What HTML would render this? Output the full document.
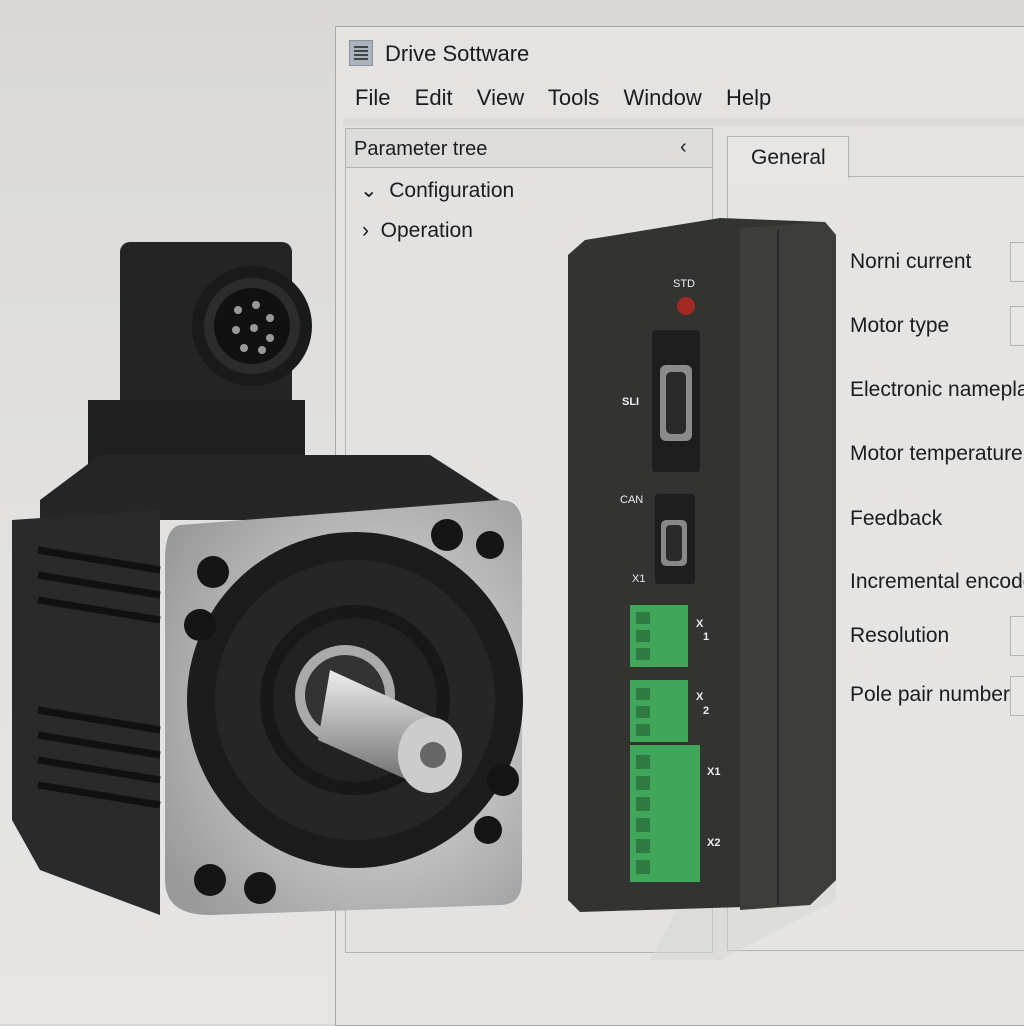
<!DOCTYPE html>
<html><head><meta charset="utf-8"><style>
*{margin:0;padding:0;box-sizing:border-box}
body{width:1024px;height:1024px;overflow:hidden;background:linear-gradient(180deg,#d9d8d6 0%,#e2e1df 50%,#e6e5e3 100%);font-family:"Liberation Sans","DejaVu Sans",sans-serif;position:relative}
.win{position:absolute;left:335px;top:26px;width:700px;height:1000px;background:#e4e3e1;border:1px solid #a8a8a6;border-right:none}
.t{position:absolute;color:#1c1c1c;white-space:nowrap}
.box{position:absolute;border:1px solid #b4b4b2}
</style></head><body>
<div class="win"></div>
<div style="position:absolute;left:349px;top:40px;width:24px;height:26px;background:#a9b3be;border:1px solid #8a949e"></div>
<div style="position:absolute;left:354px;top:46px;width:14px;height:14px;background:repeating-linear-gradient(180deg,#444 0 2px,transparent 2px 4px)"></div>
<div class="t" style="left:385px;top:41px;font-size:22px">Drive Sottware</div>
<div class="t" style="left:355px;top:85px;font-size:22px;word-spacing:6px">File&nbsp; Edit&nbsp; View&nbsp; Tools&nbsp; Window&nbsp; Help</div>
<div style="position:absolute;left:343px;top:118px;width:681px;height:8px;background:#dcdbd9"></div>
<div class="box" style="left:345px;top:128px;width:368px;height:825px;background:#e3e2e0"></div>
<div class="box" style="left:345px;top:128px;width:368px;height:40px;background:#dddcda"></div>
<div class="t" style="left:354px;top:138px;font-size:20px">Parameter tree</div>
<div class="t" style="left:680px;top:136px;font-size:20px">&lsaquo;</div>
<div class="t" style="left:360px;top:178px;font-size:21px">&#8964;&nbsp; Configuration</div>
<div class="t" style="left:362px;top:219px;font-size:21px">›&nbsp; Operation</div>
<div class="box" style="left:727px;top:176px;width:310px;height:775px;background:#e5e4e2"></div>
<div class="box" style="left:727px;top:136px;width:122px;height:42px;background:#e7e6e4;border-bottom:none"></div>
<div class="t" style="left:751px;top:146px;font-size:21px">General</div>
<div class="t" style="left:850px;top:250px;font-size:21px">Norni current</div>
<div class="t" style="left:850px;top:314px;font-size:21px">Motor type</div>
<div class="t" style="left:850px;top:378px;font-size:21px">Electronic nameplate</div>
<div class="t" style="left:850px;top:442px;font-size:21px">Motor temperature</div>
<div class="t" style="left:850px;top:507px;font-size:21px">Feedback</div>
<div class="t" style="left:850px;top:570px;font-size:21px">Incremental encoder</div>
<div class="t" style="left:850px;top:624px;font-size:21px">Resolution</div>
<div class="t" style="left:850px;top:683px;font-size:21px">Pole pair number</div>
<div class="box" style="left:1010px;top:242px;width:20px;height:40px;background:#e8e7e5"></div>
<div class="box" style="left:1010px;top:306px;width:20px;height:40px;background:#e8e7e5"></div>
<div class="box" style="left:1010px;top:616px;width:20px;height:40px;background:#e8e7e5"></div>
<div class="box" style="left:1010px;top:676px;width:20px;height:40px;background:#e8e7e5"></div>

<svg width="1024" height="1024" style="position:absolute;left:0;top:0">
<defs>
<radialGradient id="al" cx="0.6" cy="0.5" r="0.7"><stop offset="0" stop-color="#e8e8e8"/><stop offset="1" stop-color="#9a9a9a"/></radialGradient>
<linearGradient id="sh" x1="0" y1="0" x2="0" y2="1"><stop offset="0" stop-color="#eee"/><stop offset="0.5" stop-color="#aaa"/><stop offset="1" stop-color="#666"/></linearGradient>
</defs>
<polygon points="836,620 836,900 720,960 650,960" fill="#d6d5d3" opacity="0.5"/>
<polygon points="585,240 720,218 825,222 836,235 836,880 810,905 580,912 568,900 568,255" fill="#333432"/>
<polygon points="740,228 825,222 836,235 836,880 810,905 740,910" fill="#3d3e3c"/>
<line x1="778" y1="230" x2="778" y2="905" stroke="#2a2a2a" stroke-width="2"/>
<rect x="652" y="330" width="48" height="142" rx="3" fill="#1e1e1e"/>
<rect x="660" y="365" width="32" height="76" rx="6" fill="#8a8a8a"/>
<rect x="666" y="372" width="20" height="62" rx="5" fill="#2a2a2a"/>
<rect x="655" y="494" width="40" height="90" rx="3" fill="#1e1e1e"/>
<rect x="661" y="520" width="26" height="46" rx="5" fill="#888"/>
<rect x="666" y="525" width="16" height="36" rx="4" fill="#2a2a2a"/>
<circle cx="686" cy="306" r="9" fill="#a32a22"/>
<text x="673" y="287" font-size="11" fill="#eee">STD</text>
<text x="622" y="405" font-size="11" fill="#eee" font-weight="bold">SLI</text>
<text x="620" y="503" font-size="11" fill="#eee">CAN</text>
<text x="632" y="582" font-size="11" fill="#eee">X1</text>
<rect x="630" y="605" width="58" height="62" fill="#3fa65a"/>
<rect x="630" y="680" width="58" height="62" fill="#3fa65a"/>
<rect x="630" y="745" width="70" height="137" fill="#3fa65a"/>
<g fill="#2e7a42"><rect x="636" y="612" width="14" height="12"/><rect x="636" y="630" width="14" height="12"/><rect x="636" y="648" width="14" height="12"/>
<rect x="636" y="688" width="14" height="12"/><rect x="636" y="706" width="14" height="12"/><rect x="636" y="724" width="14" height="12"/>
<rect x="636" y="755" width="14" height="14"/><rect x="636" y="776" width="14" height="14"/><rect x="636" y="797" width="14" height="14"/><rect x="636" y="818" width="14" height="14"/><rect x="636" y="839" width="14" height="14"/><rect x="636" y="860" width="14" height="14"/></g>
<g fill="#eee" font-size="11" font-weight="bold"><text x="696" y="627">X</text><text x="703" y="640">1</text><text x="696" y="700">X</text><text x="703" y="714">2</text><text x="707" y="775">X1</text><text x="707" y="846">X2</text></g>
<rect x="120" y="242" width="172" height="170" rx="10" fill="#242424"/>
<circle cx="252" cy="326" r="60" fill="#1a1a1a"/>
<circle cx="252" cy="326" r="48" fill="#2c2c2c"/>
<circle cx="252" cy="326" r="38" fill="#111"/>
<g fill="#999"><circle cx="238" cy="310" r="4"/><circle cx="256" cy="305" r="4"/><circle cx="270" cy="318" r="4"/><circle cx="236" cy="330" r="4"/><circle cx="254" cy="328" r="4"/><circle cx="270" cy="338" r="4"/><circle cx="244" cy="348" r="4"/><circle cx="262" cy="350" r="4"/></g>
<polygon points="88,400 305,400 305,470 88,470" fill="#202020"/>
<polygon points="40,500 100,455 430,455 500,500 500,520 40,520" fill="#262626"/>
<polygon points="12,520 160,510 160,915 40,870 12,820" fill="#2a2a2a"/>
<g stroke="#111" stroke-width="7"><line x1="38" y1="550" x2="160" y2="570"/><line x1="38" y1="575" x2="160" y2="595"/><line x1="38" y1="600" x2="160" y2="620"/><line x1="38" y1="710" x2="160" y2="730"/><line x1="38" y1="735" x2="160" y2="755"/><line x1="38" y1="760" x2="160" y2="780"/><line x1="38" y1="785" x2="160" y2="805"/></g>
<path d="M180,525 L500,500 Q522,500 522,525 L522,880 Q522,905 500,905 L210,915 Q165,915 165,880 L165,560 Q165,528 180,525Z" fill="url(#al)"/>
<circle cx="355" cy="700" r="168" fill="#1c1c1c"/>
<circle cx="355" cy="700" r="140" fill="#262626"/>
<circle cx="355" cy="700" r="95" fill="#181818"/>
<circle cx="355" cy="700" r="82" fill="#222"/>
<circle cx="345" cy="695" r="50" fill="#aaa"/>
<circle cx="345" cy="695" r="40" fill="#333"/>
<polygon points="330,670 450,725 430,790 318,740" fill="url(#sh)"/>
<ellipse cx="430" cy="755" rx="32" ry="38" fill="#ccc"/>
<circle cx="433" cy="755" r="13" fill="#666"/>
<g fill="#151515"><circle cx="213" cy="572" r="16"/><circle cx="200" cy="625" r="16"/><circle cx="447" cy="535" r="16"/><circle cx="503" cy="780" r="16"/><circle cx="210" cy="880" r="16"/><circle cx="260" cy="888" r="16"/><circle cx="490" cy="545" r="14"/><circle cx="488" cy="830" r="14"/></g>
</svg>
</body></html>
